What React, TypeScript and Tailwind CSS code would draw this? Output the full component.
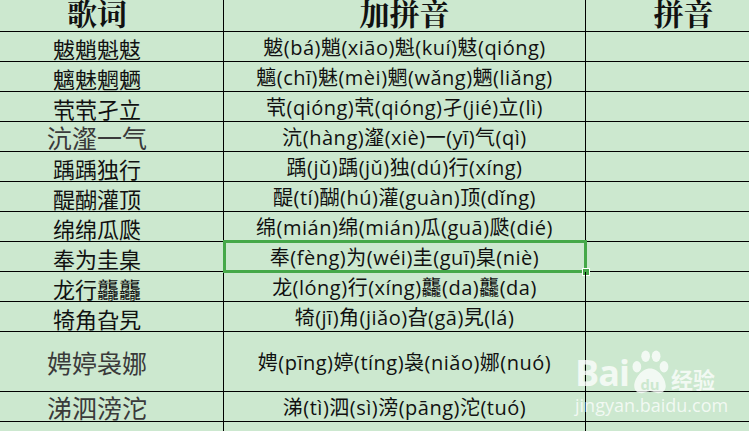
import React from "react";

type Row = { w: string; p: string; big?: boolean; tall?: boolean; sel?: boolean };

const rows: Row[] = [
  { w: "魃魈魁鬾", p: "魃(bá)魈(xiāo)魁(kuí)鬾(qióng)" },
  { w: "魑魅魍魉", p: "魑(chī)魅(mèi)魍(wǎng)魉(liǎng)" },
  { w: "茕茕孑立", p: "茕(qióng)茕(qióng)孑(jié)立(lì)" },
  { w: "沆瀣一气", p: "沆(hàng)瀣(xiè)一(yī)气(qì)", big: true },
  { w: "踽踽独行", p: "踽(jǔ)踽(jǔ)独(dú)行(xíng)" },
  { w: "醍醐灌顶", p: "醍(tí)醐(hú)灌(guàn)顶(dǐng)" },
  { w: "绵绵瓜瓞", p: "绵(mián)绵(mián)瓜(guā)瓞(dié)" },
  { w: "奉为圭臬", p: "奉(fèng)为(wéi)圭(guī)臬(niè)", sel: true },
  { w: "龙行龘龘", p: "龙(lóng)行(xíng)龘(da)龘(da)" },
  { w: "犄角旮旯", p: "犄(jī)角(jiǎo)旮(gā)旯(lá)" },
  { w: "娉婷袅娜", p: "娉(pīng)婷(tíng)袅(niǎo)娜(nuó)", big: true, tall: true },
  { w: "涕泗滂沱", p: "涕(tì)泗(sì)滂(pāng)沱(tuó)", big: true },
];

const cjk = { fontFamily: '"Noto Sans CJK SC", sans-serif' };
const pin = { fontFamily: '"Open Sans", "Noto Sans CJK SC", sans-serif' };
const head = { fontFamily: '"Noto Serif CJK SC", "Noto Sans CJK SC", serif' };

function Paw() {
  return (
    <svg width="42" height="46" viewBox="0 0 48 52" className="block">
      <g fill="rgba(255,255,255,0.75)">
        <ellipse cx="9" cy="20" rx="5" ry="6.5" />
        <ellipse cx="19" cy="8" rx="5" ry="6.5" />
        <ellipse cx="31" cy="8" rx="5" ry="6.5" />
        <ellipse cx="40" cy="20" rx="5" ry="6.5" />
        <path d="M24 22 C14 22 6 34 6 42 C6 49 12 51 16 50 C20 49 22 48 24 48 C26 48 28 49 32 50 C36 51 42 49 42 42 C42 34 34 22 24 22 Z" />
      </g>
      <text x="24" y="46" textAnchor="middle" fontSize="17" fontWeight="700" fill="#cce8cf" style={{ fontFamily: '"Open Sans", sans-serif' }}>du</text>
    </svg>
  );
}

export default function App() {
  return (
    <div className="relative w-[749px] h-[431px] overflow-hidden bg-[#cce8cf] text-[#111]">
      <div className="flex flex-col w-[781px]">
        <div className="flex h-[32px] border-b border-black">
          <div className="w-[224px] border-r border-black flex justify-center items-center pr-[29px]">
            <span className="text-[30px] font-bold leading-none -mt-[8px]" style={head}>歌词</span>
          </div>
          <div className="w-[362px] border-r border-black flex justify-center items-center">
            <span className="text-[30px] font-bold leading-none -mt-[8px]" style={head}>加拼音</span>
          </div>
          <div className="flex-1 flex justify-center items-center">
            <span className="text-[30px] font-bold leading-none -mt-[8px]" style={head}>拼音</span>
          </div>
        </div>
        {rows.map((r, i) => (
          <div key={i} className={`flex border-b border-black ${r.tall ? "h-[60px]" : "h-[30px]"}`}>
            <div className="w-[224px] border-r border-black flex justify-center items-center pr-[29px]">
              <span
                className={`leading-none mt-[2px] ${r.big ? "text-[25px] text-[#3a3a3a]" : "text-[22px] text-[#111]"}`}
                style={cjk}
              >
                {r.w}
              </span>
            </div>
            <div className="relative w-[362px] border-r border-black flex justify-center items-center">
              <span className="text-[20px] leading-none mt-[2px] tracking-[0.5px] text-[#111]" style={pin}>{r.p}</span>
              {r.sel && (
                <>
                  <div className="absolute -left-[1px] -top-[2px] -right-[2px] -bottom-[2px] border-[3px] border-[#45a849]" />
                  <div className="absolute -right-[4px] -bottom-[4px] w-[6px] h-[6px] bg-[#45a849] outline outline-1 outline-white" />
                </>
              )}
            </div>
            <div className="flex-1" />
          </div>
        ))}
        <div className="flex h-[30px]">
          <div className="w-[224px] border-r border-black" />
          <div className="w-[362px] border-r border-black" />
          <div className="flex-1" />
        </div>
      </div>

      <div className="absolute left-[575px] top-[349px] flex flex-col items-start text-white/75">
        <div className="flex items-end">
          <span className="text-[36px] font-bold leading-none tracking-[-1px]" style={{ fontFamily: '"Open Sans", sans-serif' }}>Bai</span>
          <div className="-mb-[4px]"><Paw /></div>
          <span className="text-[22px] font-bold leading-none mb-[2px]" style={cjk}>经验</span>
        </div>
        <span className="text-[18px] leading-none mt-[5px]" style={{ fontFamily: '"Open Sans", sans-serif' }}>jingyan.baidu.com</span>
      </div>
    </div>
  );
}
